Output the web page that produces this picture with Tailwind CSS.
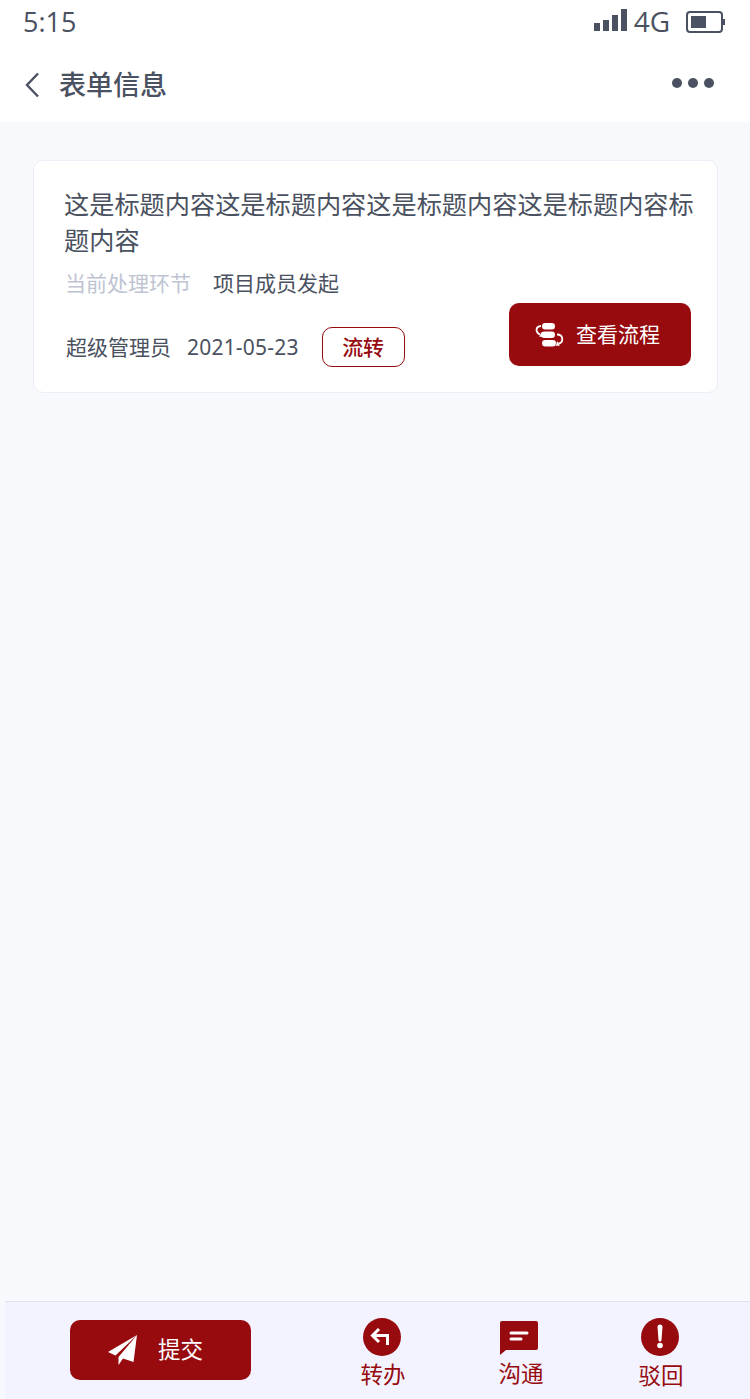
<!DOCTYPE html>
<html lang="zh-CN">
<head>
<meta charset="utf-8">
<script src="https://cdn.jsdelivr.net/npm/@tailwindcss/browser@4"></script>
</head>
<body class="m-0">
<div class="w-[750px] h-[1399px] flex flex-col bg-[#f8f9fd] overflow-hidden font-['Noto_Sans','Noto_Sans_CJK_SC',sans-serif] text-[#4a5160]">
  <div class="h-[44px] bg-white flex items-center justify-between pl-[23px] pr-[25px] shrink-0">
    <span class="text-[27px] leading-[44px] font-['Open_Sans',sans-serif]">5:15</span>
    <div class="flex items-center">
      <svg width="34" height="24" viewBox="0 0 34 24" class="fill-[#4a5160] -translate-y-[1px]"><rect x="0" y="14" width="6" height="8"/><rect x="9" y="11" width="6" height="11"/><rect x="18" y="6" width="6" height="16"/><rect x="27" y="0" width="6" height="22"/></svg>
      <span class="ml-[7px] text-[28px] leading-[44px] font-['Open_Sans',sans-serif] -translate-x-[1px] -translate-y-[1px]">4G</span>
      <svg width="39" height="22" viewBox="0 0 39 22" class="ml-[15px]"><rect x="1" y="1" width="35" height="20" rx="3" fill="none" stroke="#4a5160" stroke-width="2"/><rect x="5" y="5" width="15" height="12" fill="#4a5160"/><rect x="37" y="8" width="2" height="6" fill="#4a5160"/></svg>
    </div>
  </div>
  <div class="h-[78px] bg-white flex items-center justify-between pl-[24px] pr-[36px] shrink-0">
    <div class="flex items-center mt-[3px]">
      <svg width="16" height="26" viewBox="0 0 16 26" fill="none" stroke="#4a5160" stroke-width="2.4"><path d="M14 1.500 3 13l11 11.500"/></svg>
      <span class="ml-[19px] text-[27px] leading-[38px] font-medium">表单信息</span>
    </div>
    <div class="flex gap-[6px]">
      <span class="w-[10px] h-[10px] rounded-full bg-[#4a5160]"></span>
      <span class="w-[10px] h-[10px] rounded-full bg-[#4a5160]"></span>
      <span class="w-[10px] h-[10px] rounded-full bg-[#4a5160]"></span>
    </div>
  </div>
  <div class="flex-1 px-[33px] pt-[38px]">
    <div class="w-[685px] h-[233px] bg-white rounded-[10px] border border-[#eceef5] pl-[30px] pr-[26px] pt-[25px]">
      <div class="text-[25.200px] leading-[36px] w-[632px]">这是标题内容这是标题内容这是标题内容这是标题内容标题内容</div>
      <div class="mt-[10px] flex text-[21px] leading-[30px] pl-[1px]">
        <span class="text-[#bec4d2]">当前处理环节</span>
        <span class="ml-[22px]">项目成员发起</span>
      </div>
      <div class="mt-[16px] flex justify-between items-start">
        <div class="flex items-center mt-[13px] pl-[2px] text-[21px] leading-[40px]">
          <span>超级管理员</span>
          <span class="ml-[16px] tracking-[0.2px]">2021-05-23</span>
          <span class="ml-[23px] w-[83px] h-[40px] flex items-center justify-center rounded-[10px] border border-[#970a0e] text-[#970a0e] font-medium">流转</span>
        </div>
        <div class="w-[182px] h-[63px] -mt-[11px] rounded-[10px] bg-[#970a0e] flex items-center pl-[26px] text-white text-[21px]">
          <svg width="29" height="26" viewBox="0 0 29 26" fill="none"><rect x="7" y="1" width="13" height="6.500" rx="3.250" fill="#fff"/><rect x="6" y="9.500" width="14" height="6.500" rx="3.250" fill="#fff"/><rect x="7" y="18" width="14" height="6.500" rx="3.250" fill="#fff"/><path d="M6 4C0.500 4.500 0 10 5 12.500M22 12.500c6.500 0 7 8 1.500 9" stroke="#fff" stroke-width="1.800"/><path d="M7 10l-3 4.500 4 .5ZM22 19l3 4.500-4 .5Z" fill="#fff"/></svg>
          <span class="ml-[12px]">查看流程</span>
        </div>
      </div>
    </div>
  </div>
  <div class="ml-[5px] h-[98px] bg-[#f2f3fe] border-t border-[#e0e1ee] flex shrink-0 pt-[18px]">
    <div class="ml-[65px] w-[181px] h-[60px] rounded-[10px] bg-[#970a0e] flex items-center pl-[38px] text-white text-[22.500px]">
      <svg width="30" height="30" viewBox="0 0 30 30"><path d="M29 0 0 17l7.500 3.500L29 0ZM29 0 10.500 22V30l4.500-6.500 10.500 3.500L29 0Z" fill="#fff"/></svg>
      <span class="ml-[20px]">提交</span>
    </div>
    <div class="ml-[101px] w-[60px] -mt-[2px] flex flex-col items-center text-[#970a0e] text-[22.500px] leading-[32px]">
      <svg width="38" height="38" viewBox="0 0 38 38"><circle cx="19" cy="19" r="19" fill="#970a0e"/><path d="M16 11l-6.500 6.500 6.500 6.500M10 17.500h14.500V27" fill="none" stroke="#fff" stroke-width="3"/></svg>
      <span class="mt-[3px] translate-x-[1px]">转办</span>
    </div>
    <div class="ml-[77px] w-[60px] -mt-[2px] flex flex-col items-center text-[#970a0e] text-[22.500px] leading-[32px]">
      <svg width="40" height="38" viewBox="0 0 40 38"><path d="M3 3h34a2 2 0 0 1 2 2v25a2 2 0 0 1-2 2H7l-6 5V5a2 2 0 0 1 2-2Z" fill="#970a0e"/><path d="M12 15h16M12 21h10" stroke="#fff" stroke-width="3" stroke-linecap="round"/></svg>
      <span class="mt-[2px] translate-x-[2px]">沟通</span>
    </div>
    <div class="ml-[81px] w-[60px] -mt-[2px] flex flex-col items-center text-[#970a0e] text-[22.500px] leading-[32px]">
      <svg width="38" height="38" viewBox="0 0 38 38"><circle cx="19" cy="19" r="19" fill="#970a0e"/><path d="M16.500 9a2.500 2.500 0 0 1 5 0l-1 13a1.500 1.500 0 0 1-3 0Z" fill="#fff"/><circle cx="19" cy="27.500" r="2.800" fill="#fff"/></svg>
      <span class="mt-[4px] translate-x-[1px]">驳回</span>
    </div>
  </div>
</div>
</body>
</html>
